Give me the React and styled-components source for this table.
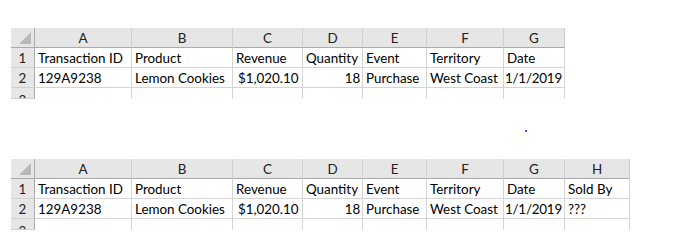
import styled, { createGlobalStyle } from 'styled-components';

const GlobalStyle = createGlobalStyle`
  html, body {
    margin: 0;
    padding: 0;
    background: #ffffff;
  }
  body {
    font-family: Lato, "Liberation Sans", sans-serif;
  }
`;

const widths = [24, 97, 101, 70, 60, 64, 77, 61, 65];
const letters = ['A', 'B', 'C', 'D', 'E', 'F', 'G', 'H'];

const baseRows = [
  [
    { text: 'Transaction ID' },
    { text: 'Product' },
    { text: 'Revenue' },
    { text: 'Quantity' },
    { text: 'Event' },
    { text: 'Territory' },
    { text: 'Date' },
    { text: 'Sold By' },
  ],
  [
    { text: '129A9238' },
    { text: 'Lemon Cookies' },
    { text: '$1,020.10', money: true },
    { text: '18', right: true },
    { text: 'Purchase' },
    { text: 'West Coast' },
    { text: '1/1/2019', right: true },
    { text: '???' },
  ],
];

const Page = styled.div`
  position: relative;
  width: 699px;
  height: 241px;
  padding: 28px 0 0 11px;
  box-sizing: border-box;
  display: flex;
  flex-direction: column;
  gap: 51px;
`;

const Sheet = styled.div`
  display: grid;
  grid-template-columns: ${(p) => p.$cols.map((w) => `${w}px`).join(' ')};
  grid-auto-rows: 20px;
  width: max-content;
  font-size: 13.4px;
  color: #000000;
`;

const Corner = styled.div`
  position: relative;
  background: #e6e6e6;
  border-right: 1px solid #ababab;
  border-bottom: 1px solid #ababab;
  overflow: hidden;

  &::after {
    content: '';
    position: absolute;
    right: 3px;
    bottom: 3px;
    border-style: solid;
    border-width: 0 0 12px 12px;
    border-color: transparent transparent #b8b8b8 transparent;
  }
`;

const ColHead = styled.div`
  background: #e6e6e6;
  border-right: 1px solid ${(p) => (p.$last ? '#c8c8c8' : '#d0d0d0')};
  border-bottom: 1px solid #ababab;
  display: flex;
  align-items: center;
  justify-content: center;
  color: #222222;
`;

const RowHead = styled.div`
  background: #e6e6e6;
  border-right: 1px solid #ababab;
  border-bottom: 1px solid #d0d0d0;
  display: flex;
  align-items: flex-end;
  justify-content: center;
  padding-bottom: 1px;
  color: #222222;
  overflow: hidden;
  height: ${(p) => (p.$cut ? '9px' : 'auto')};
`;

const Cell = styled.div`
  border-right: 1px solid #d4d4d4;
  border-bottom: 1px solid ${(p) => (p.$cut ? 'transparent' : '#d4d4d4')};
  display: flex;
  align-items: flex-end;
  justify-content: ${(p) => (p.$right ? 'flex-end' : 'flex-start')};
  padding: 0 ${(p) => (p.$right ? '2px' : '0')} 1px ${(p) => (p.$money ? '5px' : '3px')};
  white-space: nowrap;
  letter-spacing: ${(p) => (p.$right ? '-0.2px' : '0')};
  overflow: hidden;
  height: ${(p) => (p.$cut ? '9px' : 'auto')};
`;

const CutRowNumber = styled.span`
  transform: translateY(11px);
`;

const Dot = styled.span`
  position: absolute;
  left: 525px;
  top: 130px;
  width: 2px;
  height: 2px;
  background: #3b4cff;
`;

const Spreadsheet = ({ columns }) => {
  const cols = widths.slice(0, columns + 1);
  return (
    <Sheet $cols={cols}>
      <Corner />
      {letters.slice(0, columns).map((l, i) => (
        <ColHead key={l} $last={i === columns - 1}>{l}</ColHead>
      ))}
      {baseRows.map((row, r) => [
        <RowHead key={`h${r}`}>{r + 1}</RowHead>,
        ...row.slice(0, columns).map((c, i) => (
          <Cell key={`${r}-${i}`} $right={c.right} $money={c.money}>
            {c.text}
          </Cell>
        )),
      ])}
      <RowHead $cut>
        <CutRowNumber>3</CutRowNumber>
      </RowHead>
      {letters.slice(0, columns).map((l) => (
        <Cell key={`cut-${l}`} $cut />
      ))}
    </Sheet>
  );
};

export default function App() {
  return (
    <>
      <GlobalStyle />
      <Page>
        <Spreadsheet columns={7} />
        <Spreadsheet columns={8} />
        <Dot />
      </Page>
    </>
  );
}
